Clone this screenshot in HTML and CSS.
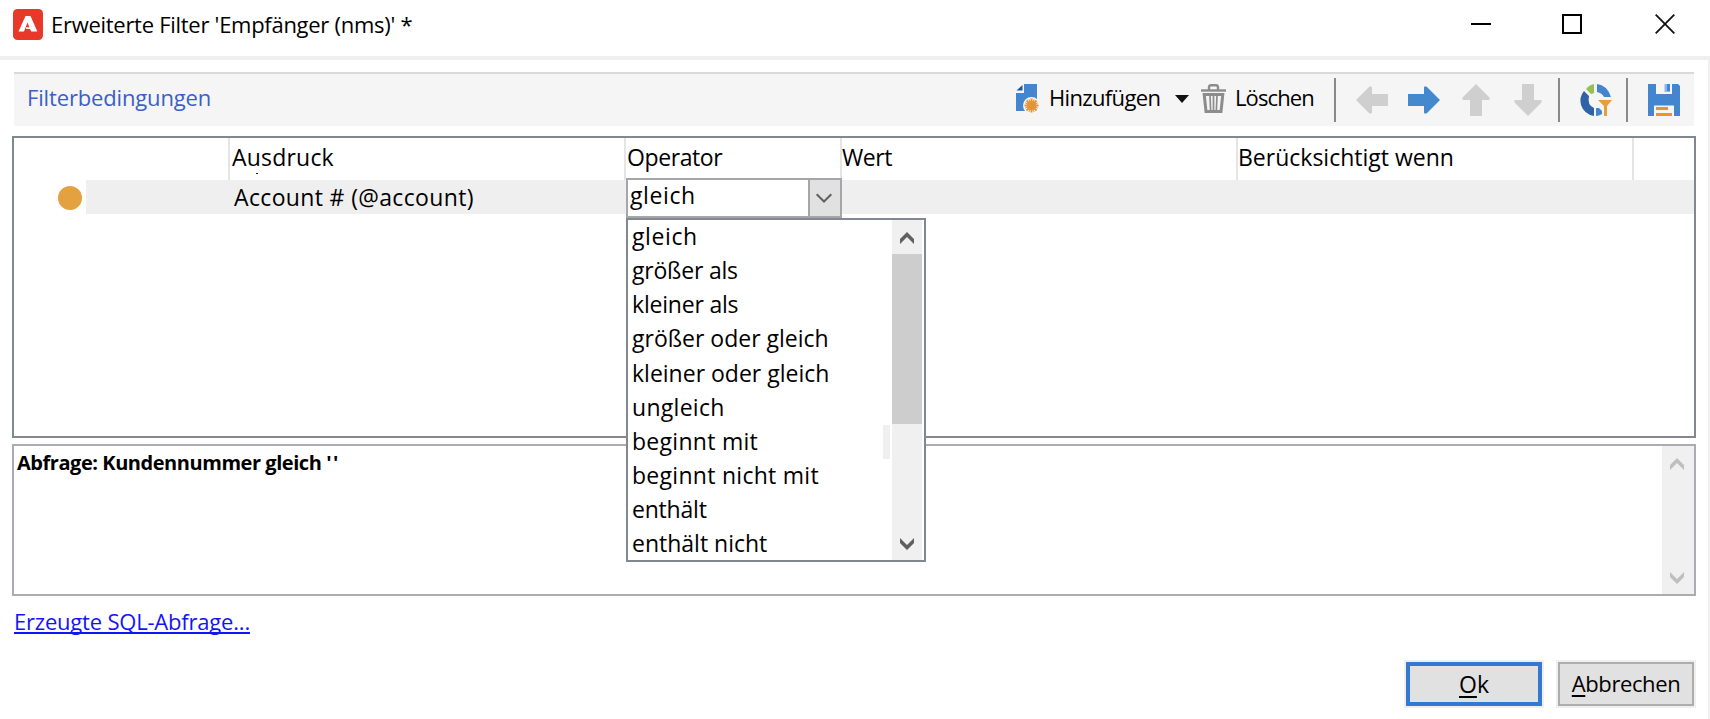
FILE: index.html
```html
<!DOCTYPE html>
<html lang="de">
<head>
<meta charset="utf-8">
<title>Erweiterte Filter</title>
<link rel="stylesheet" href="styles.css">
</head>
<body>
<div class="window">
  <header class="titlebar">
    <svg class="app-logo" width="30" height="31" viewBox="0 0 30 31"><rect width="30" height="31" rx="4.500" fill="#e8382a"/><path d="M12.500 7h5l6.800 15.500h-6l-1.300-2.500h-3.800v-2l3.300.500-2-5-3.500 9H5.500z" fill="#fff"/></svg>
    <h1 class="title"><span class="t t-title">Erweiterte Filter 'Empfänger (nms)' *</span></h1>
    <div class="window-controls">
      <svg width="20" height="20" viewBox="0 0 20 20"><path d="M0 10h20" stroke="#000" stroke-width="2"/></svg>
      <svg width="20" height="20" viewBox="0 0 20 20"><path d="M1 1h18v18H1z" fill="none" stroke="#000" stroke-width="2"/></svg>
      <svg width="20" height="20" viewBox="0 0 20 20"><path d="M.7.700l18.600 18.600M19.300.7L.7 19.300" stroke="#111" stroke-width="1.800"/></svg>
    </div>
  </header>
  <main class="content">
    <section class="toolbar">
      <h2 class="section"><span class="t t-section">Filterbedingungen</span></h2>
      <div class="tools">
        <svg class="i-add" width="24" height="29" viewBox="0 0 24 29"><path d="M9 0h13v27H1V9h8z" fill="#4386cf"/><path d="M1.500 6.500L7.500 1v5.500z" fill="#1f55a0"/><circle cx="16.500" cy="21.500" r="8.500" fill="#f5f5f5"/><path d="M23.500 21.500H9.500M16.500 14.500v14M11.500 16.500l10 10M21.500 16.500l-10 10" stroke="#e3962f" stroke-width="2"/><path d="M13.900 15.200l5.200 12.600M19.100 15.200l-5.200 12.600M10.200 18.900l12.600 5.200M10.200 24.100l12.600-5.200" stroke="#e3962f" stroke-width="1"/><circle cx="16.500" cy="21.500" r="4.600" fill="#e3962f"/></svg>
        <span class="lbl lbl-add"><span class="t t-add">Hinzufügen</span></span>
        <svg class="i-caret" width="14" height="8" viewBox="0 0 14 8"><path d="M0 0h14L7 8z" fill="#111"/></svg>
        <svg class="i-trash" width="25" height="29" viewBox="0 0 25 29" fill="none" stroke="#8c8c8c"><path d="M0 6.500h25" stroke-width="2.400"/><path d="M8 6V3.500Q8 1.200 10 1.200h5q2 0 2 2.300V6" stroke-width="2.400"/><path d="M3.200 10.500h18.600L20 27.500H5z" stroke-width="3"/><path d="M9 11l.6 15M12.500 11v15M16 11l-.6 15" stroke-width="1.700"/></svg>
        <span class="lbl lbl-del"><span class="t t-del">Löschen</span></span>
        <i class="sep sep-a"></i>
        <svg class="i-left" width="32" height="28" viewBox="0 0 32 28"><path d="M0 14L13 1Q16-1 16 2v6h16v12H16v6q0 3-3 1z" fill="#cfcfcf"/></svg>
        <svg class="i-right" width="32" height="28" viewBox="0 0 32 28"><path d="M32 14L19 1Q16-1 16 2v6H0v12h16v6q0 3 3 1z" fill="#4488ce"/></svg>
        <svg class="i-up" width="28" height="32" viewBox="0 0 28 32"><path d="M14 0L27 13q2 3-1 3h-6v16H8V16H2q-3 0-1-3z" fill="#cfcfcf"/></svg>
        <svg class="i-down" width="28" height="32" viewBox="0 0 28 32"><path d="M14 32L27 19q2-3-1-3h-6V0H8v16H2q-3 0-1 3z" fill="#cfcfcf"/></svg>
        <i class="sep sep-b"></i>
        <svg class="i-preview" width="32" height="32" viewBox="0 0 32 32"><path d="M14 0v9l-3 1-5-5q3-4 8-5z" fill="#95c153"/><path d="M17 0q10 1 14 13h-7q-2-4-7-5z" fill="#4386cf"/><path d="M4 7l5 5q-2 9 5 12v8Q4 30 1 21-1 13 4 7z" fill="#2f62a6"/><path d="M16 24h3l3 3v3q-3 2-6 2z" fill="#4386cf"/><path d="M18 16h14l-5 6v10h-3V22z" fill="#e5a03b"/></svg>
        <i class="sep sep-c"></i>
        <svg class="i-save" width="32" height="32" viewBox="0 0 32 32"><path d="M0 0h8v10h16V0h6l2 2v30h-6V21.500H6V32H0z" fill="#4386cf"/><path d="M16.500 0H22v8h-5.500z" fill="#8fb8e4"/><path d="M19 0h3v7h-3z" fill="#4386cf"/><path d="M8 24.500h12M8 30.500h16" stroke="#e3962f" stroke-width="3"/></svg>
      </div>
    </section>

    <section class="grid">
      <div class="grid-head">
        <div class="cell"></div>
        <div class="cell"><span class="t t-h1">Ausdruck</span><i class="speck"></i></div>
        <div class="cell"><span class="t t-h2">Operator</span></div>
        <div class="cell tight"><span class="t t-h3">Wert</span></div>
        <div class="cell tight"><span class="t">Berücksichtigt wenn</span></div>
        <div class="cell"></div>
      </div>
      <div class="grid-row">
        <div class="marker"><i class="dot"></i></div>
        <div class="row-fill"><span class="t t-row">Account # (@account)</span></div>
      </div>
      <div class="combo">
        <div class="combo-field"><span class="t t-gleich">gleich</span>
          <div class="combo-btn"><svg width="16" height="10" viewBox="0 0 16 10"><path d="M.7 1.200L8 8.500l7.300-7.300" fill="none" stroke="#606060" stroke-width="2"/></svg></div>
        </div>
        <div class="list">
          <ul class="options">
            <li><span class="t t-gleich">gleich</span></li>
            <li><span class="t t-narrow">größer als</span></li>
            <li><span class="t t-narrow">kleiner als</span></li>
            <li><span class="t">größer oder gleich</span></li>
            <li><span class="t">kleiner oder gleich</span></li>
            <li><span class="t t-wide">ungleich</span></li>
            <li class="marked"><span class="t t-wide">beginnt mit</span></li>
            <li><span class="t t-wide">beginnt nicht mit</span></li>
            <li><span class="t t-narrow">enthält</span></li>
            <li><span class="t">enthält nicht</span></li>
          </ul>
          <div class="scroll">
            <svg width="14" height="12" viewBox="0 0 14 12"><path d="M7 0l7 7v5L7 5l-7 7V7z" fill="#606060"/></svg>
            <i class="thumb"></i>
            <svg width="14" height="12" viewBox="0 0 14 12"><path d="M7 12l7-7V0L7 7 0 0v5z" fill="#606060"/></svg>
          </div>
        </div>
      </div>
    </section>

    <section class="query">
      <p class="query-text"><span class="t t-query">Abfrage: Kundennummer gleich <span class="quotes">''</span></span></p>
      <div class="query-scroll">
        <svg width="14" height="12" viewBox="0 0 14 12"><path d="M7 0l7 7v5L7 5l-7 7V7z" fill="#bfbfbf"/></svg>
        <svg width="14" height="12" viewBox="0 0 14 12"><path d="M7 12l7-7V0L7 7 0 0v5z" fill="#bfbfbf"/></svg>
      </div>
    </section>

    <a class="sql"><span class="t t-sql">Erzeugte SQL-Abfrage...</span></a>

    <footer class="actions">
      <div class="halo"><div class="btn primary"><span class="t"><u>O</u>k</span></div></div>
      <div class="halo"><div class="btn"><span class="t t-cancel"><u>A</u>bbrechen</span></div></div>
    </footer>
  </main>
</div>
</body>
</html>
```
FILE: styles.css
```css
* { box-sizing: border-box; }
body {
  margin: 0;
  width: 1710px;
  height: 719px;
  overflow: hidden;
  background: #fff;
  color: #000;
  font: 22px/34px "Open Sans", "Noto Sans", sans-serif;
}
h1, h2, p, ul { margin: 0; padding: 0; font-size: inherit; font-weight: 400; list-style: none; }
svg { display: block; flex: none; overflow: visible; }
.t { white-space: nowrap; display: block; }
.window { height: 719px; display: flex; flex-direction: column; }

/* Title bar */
.titlebar {
  height: 60px;
  border-bottom: 4px solid #efefef;
  display: flex;
  align-items: flex-start;
  padding: 7px 35px 0 13px;
}
.app-logo { margin-top: 2px; }
.title { margin-left: 8px; }
.t-title { letter-spacing: -0.28px; }
.window-controls { display: flex; gap: 71px; margin-left: auto; padding-top: 7px; }
.window-controls svg:last-child { margin-left: 2px; }

.content {
  flex: 1;
  border-right: 2px solid #efefef;
  padding: 12px 12px 0;
  display: flex;
  flex-direction: column;
}

/* Toolbar */
.toolbar {
  height: 54px;
  margin: 0 2px;
  border-top: 2px solid #d9d9d9;
  background: #f5f5f5;
  display: flex;
  justify-content: space-between;
}
.section { color: #3b5fc9; padding: 6px 0 0 13px; }
.t-section { letter-spacing: -0.15px; }
.tools { display: flex; align-items: flex-start; width: 679px; }
.i-add { margin-top: 10px; }
.lbl { padding-top: 6px; }
.lbl-add { width: 125px; margin-left: 10px; }
.t-add { letter-spacing: -0.65px; }
.t-del { letter-spacing: -0.9px; }
.i-caret { margin: 21px 0 0 1px; }
.i-trash { margin: 10px 0 0 12px; }
.lbl-del { width: 99px; margin-left: 9px; }
.sep { width: 2px; height: 44px; background: #8a8a8a; margin-top: 4px; flex: none; }
.i-left { margin: 12px 0 0 20px; }
.i-right { margin: 12px 0 0 20px; }
.i-up { margin: 10px 0 0 22px; }
.i-down { margin: 10px 0 0 24px; }
.sep-b { margin-left: 16px; }
.i-preview { margin: 10px 0 0 20px; }
.sep-c { margin-left: 14px; }
.i-save { margin: 10px 0 0 20px; }

/* Condition grid */
.grid {
  position: relative;
  height: 302px;
  margin-top: 10px;
  border: 2px solid #828790;
  font-size: 23px;
}
.grid-head { display: grid; grid-template-columns: 216px 396px 216px 396px 396px 1fr; height: 42px; }
.cell { border-right: 2px solid #e5e5e5; padding: 2px 0 0 1px; position: relative; }
.cell.tight { padding-left: 0; }
.cell:last-child { border-right: 0; }
.t-h1 { letter-spacing: 0.2px; padding-left: 1px; }
.t-h2 { letter-spacing: -0.4px; }
.t-h3 { letter-spacing: -0.4px; }
.t-row { letter-spacing: 0.35px; }
.t-gleich { letter-spacing: 0.6px; }
.t-wide { letter-spacing: 0.28px; }
.t-narrow { letter-spacing: -0.2px; }
.speck { position: absolute; left: 26px; top: 35px; width: 2px; height: 1px; background: #222; }
.grid-row { display: flex; height: 34px; }
.marker { width: 72px; display: flex; justify-content: flex-end; align-items: center; padding-right: 4px; }
.dot { width: 24px; height: 24px; border-radius: 50%; background: #e3a140; margin-top: 2px; }
.row-fill { flex: 1; background: #efefef; padding-left: 148px; }

/* Operator drop-down over the grid */
.combo { position: absolute; left: 612px; top: 40px; width: 300px; }
.combo-field {
  width: 216px;
  height: 40px;
  border: 2px solid #a5a6aa;
  background: #fff;
  display: flex;
  justify-content: space-between;
  padding-left: 2px;
  line-height: 31px;
}
.combo-btn {
  width: 32px;
  border-left: 2px solid #a5a6aa;
  background: #e1e1e1;
  display: flex;
  align-items: center;
  justify-content: center;
  padding-right: 2px;
}
.list {
  height: 344px;
  border: 2px solid #828790;
  background: #fff;
  display: flex;
  padding-right: 2px;
  overflow: hidden;
}
.options { flex: 1; line-height: 32px; }
.options li { height: 34.150px; padding-left: 4px; }
.options .marked {
  background: linear-gradient(#efefef, #efefef) no-repeat right 2px top 0 / 7px 34px;
}
.scroll {
  width: 30px;
  background: #f0f0f0;
  display: flex;
  flex-direction: column;
  align-items: center;
  padding: 12px 0 10px;
}
.thumb { width: 30px; height: 170px; margin: 10px 0 auto; background: #cdcdcd; }

/* Query preview */
.query {
  height: 152px;
  margin-top: 6px;
  border: 2px solid #abacb2;
  display: flex;
  justify-content: space-between;
}
.query-text { padding: 0 0 0 3px; }
.t-query { font-weight: 700; font-size: 20px; letter-spacing: -0.45px; }
.quotes { letter-spacing: 1.5px; }
.query-scroll {
  width: 32px;
  background: #f0f0f0;
  display: flex;
  flex-direction: column;
  justify-content: space-between;
  padding: 12px 0 10px 8px;
}

.sql {
  color: #1414f5;
  margin: 8px 0 0 2px;
  height: 36px;
  text-decoration: underline;
  text-decoration-thickness: 2px;
  text-decoration-skip-ink: none;
  text-underline-offset: 2px;
}
.t-sql { letter-spacing: -0.2px; width: max-content; }

/* Dialog buttons */
.actions { display: flex; justify-content: flex-end; gap: 12px; margin-top: 20px; }
.halo { width: 140px; height: 48px; padding: 2px; background: #efefef; }
.btn {
  height: 44px;
  border: 2px solid #adadad;
  background: #e1e1e1;
  display: flex;
  align-items: center;
  justify-content: center;
  padding-bottom: 3px;
}
.btn.primary { border: 4px solid #3179d1; font-size: 23px; padding-bottom: 1px; }
.t-cancel { letter-spacing: -0.4px; }
u { text-decoration-thickness: 2px; text-underline-offset: 3px; }
```
